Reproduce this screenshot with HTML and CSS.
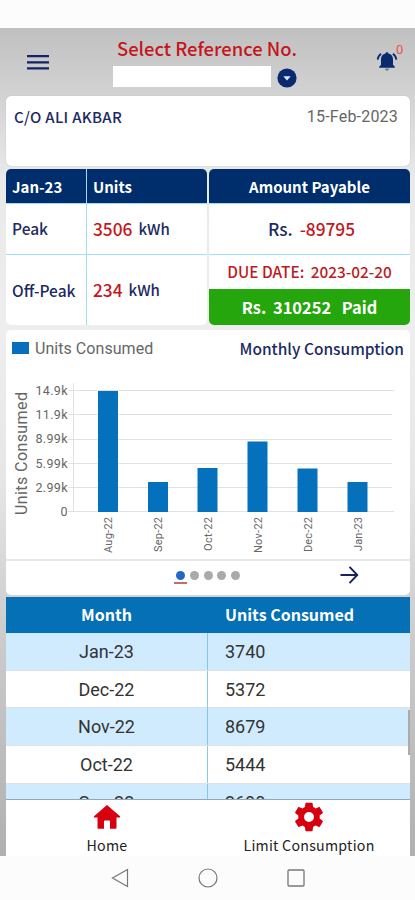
FILE: index.html
```html
<!DOCTYPE html>
<html lang="en">
<head>
<meta charset="utf-8">
<title>Monthly Consumption</title>
<link rel="stylesheet" href="styles.css">
</head>
<body>
<div class="status"></div>
<div class="app">
  <header class="top">
    <svg class="menu" width="22" height="16" viewBox="0 0 22 16"><path d="M0 2.200h22M0 8.300h22M0 14.300h22" stroke="#14226b" stroke-width="2.200"/></svg>
    <div class="picker">
      <div class="title">Select Reference No.</div>
      <div class="select">
        <div class="field"></div>
        <svg width="20" height="20" viewBox="0 0 20 20"><circle cx="10" cy="10" r="9.600" fill="#0a2a70"/><path d="M6.300 8.200h7.400L10 12.400z" fill="#dfe9fa"/></svg>
      </div>
    </div>
    <div class="alerts">
      <svg width="22" height="22" viewBox="0 0 22 22"><path fill="#0a2a70" d="M11 1.200c.9 0 1.400.6 1.400 1.400 3.100.7 4.600 3 4.600 5.600v5.600l1.800 2v.9H3.200v-.9l1.800-2V8.200c0-2.600 1.500-4.900 4.600-5.600 0-.8.5-1.400 1.400-1.400z"/><path fill="#6b7d9f" d="M9 17.500h4c0 1.300-.8 2.200-2 2.200s-2-.9-2-2.200z"/><path d="M5.100 2.700C3.200 4 2 6 1.700 8.700M16.900 2.700c1.900 1.300 3.100 3.300 3.400 6" fill="none" stroke="#0a2a70" stroke-width="1.900"/></svg>
      <span class="count">0</span>
    </div>
  </header>

  <section class="card owner">
    <span class="name">C/O ALI AKBAR</span>
    <span class="date">15-Feb-2023</span>
  </section>

  <section class="bill">
    <div class="card usage">
      <div class="cell head">Jan-23</div><div class="cell head second">Units</div>
      <div class="cell peak">Peak</div><div class="cell peak second"><b>3506</b><span class="unit">kWh</span></div>
      <div class="cell off">Off-Peak</div><div class="cell off second"><b>234</b><span class="unit">kWh</span></div>
    </div>
    <div class="card payable">
      <div class="head">Amount Payable</div>
      <div class="amount">Rs. <b>-89795</b></div>
      <div class="due">DUE DATE: <span>2023-02-20</span></div>
      <div class="paid">Rs. <span>310252</span> <span class="state">Paid</span></div>
    </div>
  </section>

  <section class="card chart">
    <div class="chart-head">
      <span class="swatch"></span><span class="legend">Units Consumed</span><span class="chart-title">Monthly Consumption</span>
    </div>
    <svg class="plot" width="404" height="193" viewBox="6 366 404 193">
      <path d="M68 390.500H394M68 414.500H392M68 439.500H392M68 463.500H392M68 487.500H392M68 511.500H394M73.500 383V512" stroke="#e2e2e2" fill="none"/>
      <g fill="#0570bb"><path d="M98 391h20v121H98zM148 482h20v30h-20zM197.500 468h20v44h-20zM247.500 441.500h20V512h-20zM297.500 468.500h20V512h-20zM347.500 482h20v30h-20z"/></g>
      <g class="ticks" text-anchor="end">
        <text x="67.500" y="394.500" textLength="32">14.9k</text><text x="67.500" y="418.500" textLength="32">11.9k</text><text x="67.500" y="443" textLength="32">8.99k</text><text x="67.500" y="467.500" textLength="32">5.99k</text><text x="67.500" y="491.500" textLength="32">2.99k</text><text x="67.500" y="515.500">0</text>
      </g>
      <g class="months" text-anchor="end">
        <text transform="translate(111.500 517) rotate(-90)" textLength="36">Aug-22</text>
        <text transform="translate(161.500 517) rotate(-90)" textLength="35">Sep-22</text>
        <text transform="translate(211.500 517) rotate(-90)" textLength="34">Oct-22</text>
        <text transform="translate(261.500 517) rotate(-90)" textLength="36">Nov-22</text>
        <text transform="translate(311.500 517) rotate(-90)" textLength="35">Dec-22</text>
        <text transform="translate(361.500 517) rotate(-90)" textLength="34">Jan-23</text>
      </g>
      <text class="axis" transform="translate(26.500 515) rotate(-90)" textLength="123">Units Consumed</text>
    </svg>
    <div class="pager">
      <div class="dots"><i class="on"></i><i></i><i></i><i></i><i></i></div>
      <svg width="19" height="20" viewBox="0 0 19 20"><path d="M0.500 10H17M9.500 1.800L17.300 10L9.500 18.200" fill="none" stroke="#17225f" stroke-width="1.900"/></svg>
    </div>
  </section>

  <section class="history">
    <div class="row hrow"><span>Month</span><span>Units Consumed</span></div>
    <div class="row tint"><span>Jan-23</span><span>3740</span></div>
    <div class="row"><span>Dec-22</span><span>5372</span></div>
    <div class="row tint"><span>Nov-22</span><span>8679</span></div>
    <div class="row"><span>Oct-22</span><span>5444</span></div>
    <div class="row tint"><span>Sep-22</span><span>3690</span></div>
    <div class="scroll"></div>
  </section>

  <nav class="tabs">
    <div class="tab"><svg width="26" height="24" viewBox="0 0 26 24"><path fill="#d7000f" d="M13 0L26 11.200v1.300h-3.500V23q0 .8-.8.800h-5.700v-7.600q0-.7-.7-.7h-4.600q-.7 0-.7.700v7.600H4.300q-.8 0-.8-.8V12.500H0v-1.300z"/></svg><span>Home</span></div>
    <div class="tab"><svg class="gear" width="28" height="30" viewBox="2.200 1.700 19.600 20.600"><path fill="#d7000f" d="M19.430 12.980c.04-.32.07-.64.07-.98s-.03-.66-.07-.98l2.110-1.650c.19-.15.24-.42.120-.64l-2-3.460c-.12-.22-.39-.3-.61-.22l-2.490 1c-.52-.4-1.080-.73-1.690-.98l-.38-2.650C14.460 2.180 14.250 2 14 2h-4c-.25 0-.46.18-.49.420l-.38 2.650c-.61.250-1.170.590-1.690.980l-2.490-1c-.23-.09-.49 0-.61.220l-2 3.460c-.13.220-.07.490.120.640l2.110 1.650c-.04.320-.07.650-.07.980s.03.660.070.980l-2.110 1.650c-.19.150-.24.420-.12.640l2 3.460c.12.220.39.300.61.220l2.490-1c.52.400 1.080.730 1.690.980l.38 2.650c.03.240.24.420.49.420h4c.25 0 .46-.18.490-.42l.38-2.650c.61-.25 1.170-.59 1.690-.98l2.490 1c.23.090.49 0 .61-.22l2-3.460c.12-.22.070-.49-.12-.64l-2.110-1.650zM12 15.500a3.500 3.500 0 1 1 0-7a3.500 3.500 0 0 1 0 7z"/></svg><span class="wide">Limit Consumption</span></div>
  </nav>
</div>
<div class="system">
  <svg width="18" height="20" viewBox="0 0 18 20"><path d="M16.500 1.500v17L1.500 10z" fill="none" stroke="#777" stroke-width="1.200"/></svg>
  <svg width="20" height="20" viewBox="0 0 20 20"><circle cx="10" cy="10" r="9" fill="none" stroke="#777" stroke-width="1.200"/></svg>
  <svg width="18" height="18" viewBox="0 0 18 18"><rect x="1" y="1" width="16" height="16" rx="1" fill="none" stroke="#777" stroke-width="1.300"/></svg>
</div>
</body>
</html>
```

FILE: styles.css
```css
* { box-sizing: border-box; }
body { margin: 0; width: 415px; height: 900px; overflow: hidden; background: #fcfcfc; font-family: "Noto Sans CJK SC", "Noto Sans", sans-serif; font-weight: 500; color: #1b2a63; }
svg { display: block; flex: none; }
.status { height: 28px; background: #fcfcfc; }
.app { height: 828px; padding: 0 5px 0 6px; background: linear-gradient(#c0c0c0, #d3d3d3 68px, #e9e9e9 150px, #eeeeee 310px, #e6e6e6 450px, #cdcdcd 600px, #b0b0b0); }

.top { height: 68px; display: flex; align-items: flex-start; }
.menu { margin: 26px 0 0 21px; }
.picker { margin: 10px 0 0 64px; width: 184px; }
.title { height: 24px; line-height: 21px; padding-left: 4px; font-size: 18.400px; color: #c4161c; white-space: nowrap; }
.select { margin-top: 4px; display: flex; align-items: center; gap: 6px; height: 21px; }
.select svg { margin-top: 3px; }
.field { width: 158px; height: 21px; background: #fff; flex: none; }
.alerts { display: flex; margin: 15px 0 0 79px; }
.alerts svg { margin-top: 8px; }
.count { font: 400 13px/14px Roboto, sans-serif; color: #e5534b; margin-left: -2px; }

.card { background: #fff; border-radius: 5px; overflow: hidden; }
.owner { height: 70px; display: flex; justify-content: space-between; padding: 9px 12px 0 8px; box-shadow: 0 0 1px #999; }
.name { font-size: 15px; line-height: 24px; letter-spacing: 0.300px; }
.date { font: 400 16px/23px Roboto, sans-serif; letter-spacing: 0.200px; color: #666; }

.bill { display: grid; grid-template-columns: 201px 201px; gap: 2px; margin-top: 3px; height: 156px; }
.usage { display: grid; grid-template-columns: 80px 1fr; grid-template-rows: 35px 51px 70px; }
.cell { display: flex; align-items: center; padding-left: 6px; font-size: 15.500px; border-bottom: 1px solid #a4dcf1; white-space: pre; }
.second { border-left: 1px solid #a4dcf1; }
.off { border-bottom: 0; }
.head, .cell.head { background: #002d6b; color: #fff; font-weight: 700; font-size: 15px; }
.peak, .off { line-height: 20px; }
.peak:not(.second) { padding-bottom: 3px; }
.cell b, .amount b { font-weight: 500; color: #c4161c; font-size: 17.300px; }
.unit { font-size: 15px; margin-left: 6px; }
.payable { display: flex; flex-direction: column; text-align: center; white-space: pre; }
.payable .head { height: 35px; line-height: 35px; border-bottom: 1px solid #a4dcf1; }
.amount { height: 51px; line-height: 50px; padding-left: 4px; font-size: 17.300px; border-bottom: 1px solid #a4dcf1; }
.amount b { margin-left: 3px; }
.due { height: 34px; line-height: 33px; font-size: 15.400px; color: #bc1b22; }
.due span { margin-left: 3px; }
.paid { height: 36px; line-height: 36px; background: #24a60c; color: #fff; font-weight: 700; font-size: 16.400px; }
.paid span { margin-left: 3px; }
.paid .state { margin-left: 7px; }

.chart { margin-top: 5px; height: 265px; }
.chart-head { display: flex; align-items: center; height: 36px; padding: 0 6px 0 6px; white-space: nowrap; }
.swatch { width: 17px; height: 12px; margin-top: -1px; background: #0570bb; }
.legend { font: 400 16px/20px Roboto, sans-serif; letter-spacing: 0.050px; color: #666; margin: 1px 0 0 6px; }
.chart-title { margin: -1px 0 0 auto; font-size: 15.500px; }
.plot text { font-family: Roboto, sans-serif; font-weight: 400; fill: #666; }
.ticks text { font-size: 12.500px; }
.months text { font-size: 11px; }
.plot .axis { font-size: 16px; }
.pager { height: 36px; border-top: 2px solid #e8e8e8; display: flex; align-items: center; justify-content: space-between; padding: 0 51px 6px 167px; }
.dots { display: flex; gap: 4.800px; }
.dots i { position: relative; width: 9px; height: 9px; border-radius: 50%; background: #aaa; }
.dots .on { background: #2467c6; margin-left: 3px; }
.dots .on::after { content: ""; position: absolute; left: -2px; top: 11px; width: 13px; height: 2px; background: #cc6965; }

.history { position: relative; margin-top: 2px; height: 202px; overflow: hidden; background: #fff; }
.row { display: grid; grid-template-columns: 202px 1fr; height: 37.700px; font: 400 18px/37px Roboto, sans-serif; color: #333; border-bottom: 1px solid #dce3e7; }
.row span:first-child { text-align: center; border-right: 1px solid #85c9e6; }
.row span:last-child { padding-left: 17px; }
.tint { background: #d0ebfe; }
.hrow { height: 36px; border: 0; background: #0570b6; color: #fff; font: 700 16px/35px "Noto Sans CJK SC", sans-serif; }
.hrow span:first-child { border-color: #0570b6; }
.scroll { position: absolute; right: 0; top: 113px; width: 2px; height: 45px; background: #aaa; }

.tabs { display: grid; grid-template-columns: 1fr 1fr; height: 57px; background: #fff; border-top: 1px solid #8faab7; }
.tab { display: flex; flex-direction: column; align-items: center; padding-top: 5px; font-size: 14.200px; font-weight: 400; line-height: 20px; color: #222; letter-spacing: 0.250px; white-space: nowrap; }
.tab span { margin-top: 6px; }
.gear { margin-top: -3px; }
.tab .wide { margin-top: 3px; }
.system { height: 44px; display: flex; align-items: center; justify-content: center; gap: 69px; }
```
